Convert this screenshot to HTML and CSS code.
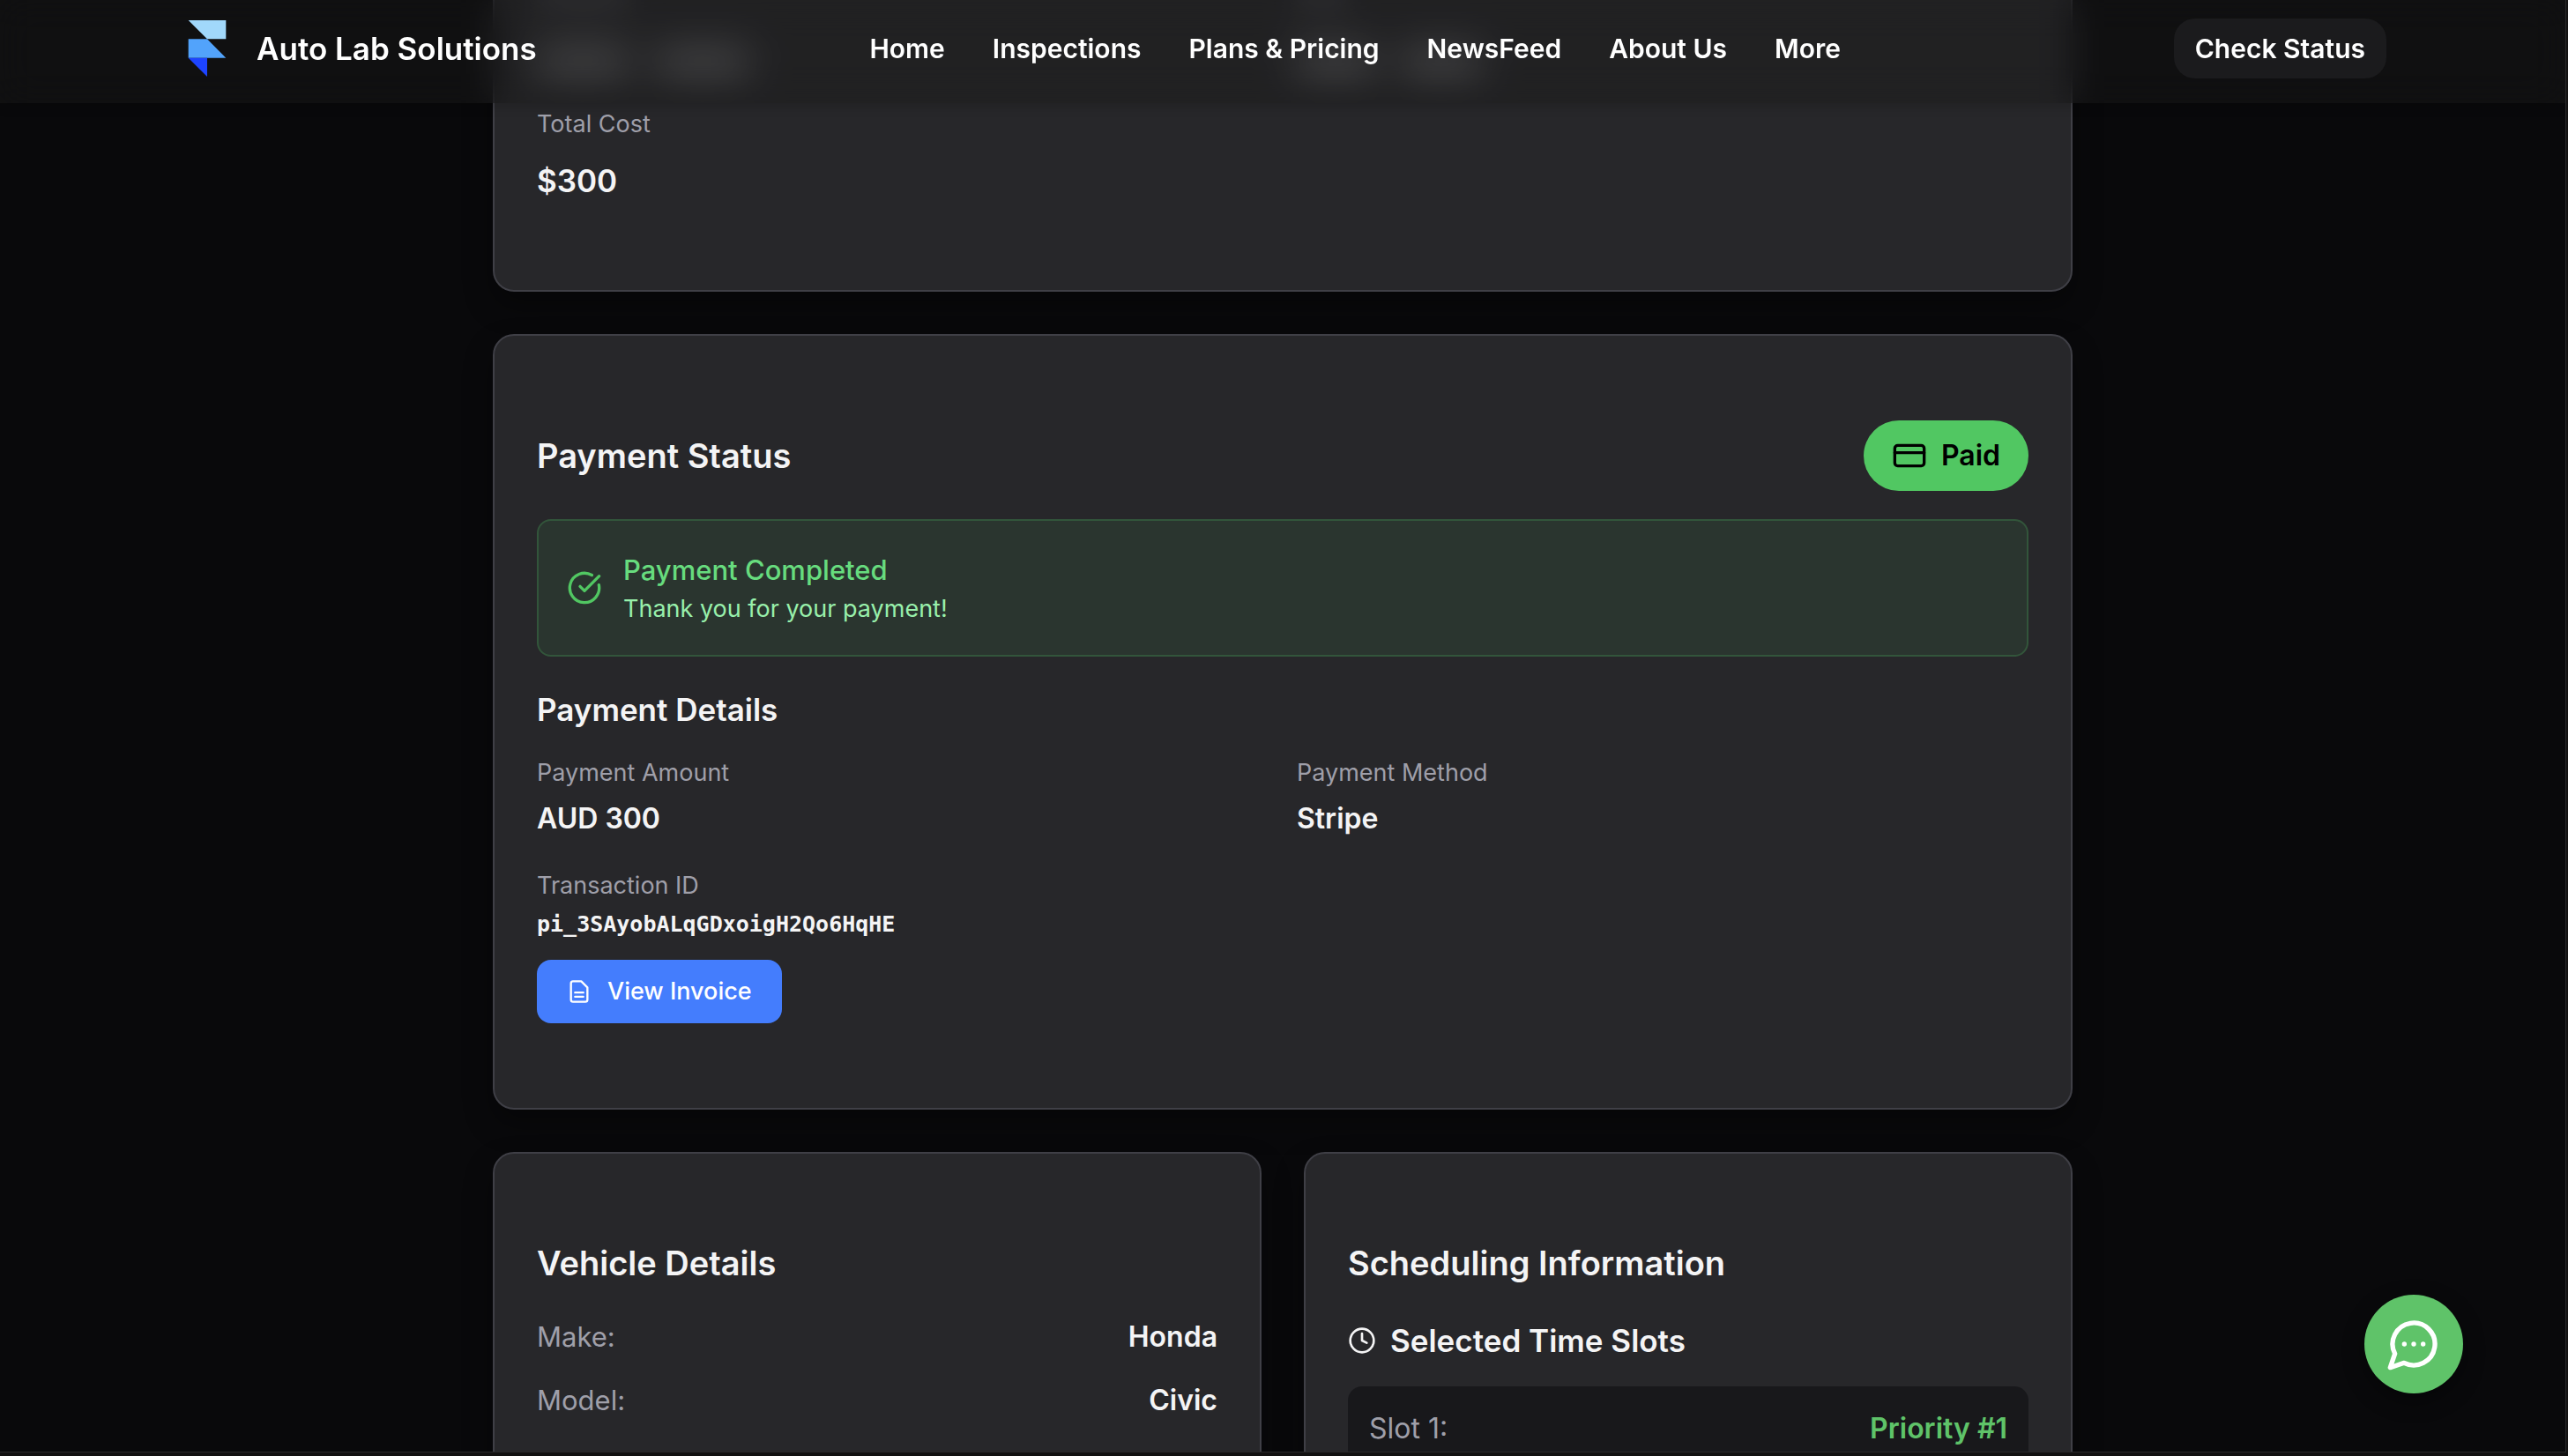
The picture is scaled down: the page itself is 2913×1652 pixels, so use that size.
FILE: index.html
```
<!DOCTYPE html>
<html lang="en">
<head>
<meta charset="utf-8">
<meta name="viewport" content="width=device-width, initial-scale=1">
<title>Auto Lab Solutions</title>
<link rel="stylesheet" href="styles.css">
</head>
<body>
<div class="window">
  <div class="viewport">
    <header class="header">
      <div class="header-inner">
        <a class="brand" href="#">
          <svg class="logo" viewBox="0 0 64 64" aria-hidden="true">
            <path fill="#a1d8fb" d="M10.67 0h42.66v21.33H32z"/>
            <path fill="#52a3fb" d="M10.67 21.33H32l21.33 21.34H10.67z"/>
            <path fill="#1d44ff" d="M10.67 42.67H32V64z"/>
          </svg>
          <span>Auto Lab Solutions</span>
        </a>
        <nav class="nav">
          <a href="#">Home</a>
          <a href="#">Inspections</a>
          <a href="#">Plans &amp; Pricing</a>
          <a href="#">NewsFeed</a>
          <a href="#">About Us</a>
          <a href="#">More</a>
        </nav>
        <button class="status-button" type="button">Check Status</button>
      </div>
    </header>

    <div class="scroll">
      <main class="page">
        <section class="card summary">
          <div class="grid" aria-hidden="true">
            <div class="field">
              <div class="ghost ghost-label"><i class="w-l"></i></div>
              <div class="ghost ghost-value"><i class="w-l"></i><i class="w-l"></i></div>
            </div>
            <div class="field">
              <div class="ghost ghost-label"><i class="w-s"></i></div>
              <div class="ghost ghost-value"><i class="w-m"></i><i class="w-m"></i></div>
            </div>
          </div>
          <dl class="field field-total">
            <dt class="label">Total Cost</dt>
            <dd class="total">$300</dd>
          </dl>
        </section>

        <section class="card payment">
          <div class="card-head">
            <h2>Payment Status</h2>
            <span class="pill">
              <svg class="icon icon-l" viewBox="0 0 24 24" aria-hidden="true"><rect x="2" y="5" width="20" height="14" rx="2"/><path d="M2 10h20"/></svg>
              Paid
            </span>
          </div>
          <div class="alert">
            <svg class="icon icon-l" viewBox="0 0 24 24" aria-hidden="true"><path d="M21.801 10A10 10 0 1 1 17 3.335"/><path d="m9 11 3 3L22 4"/></svg>
            <div>
              <p class="alert-title">Payment Completed</p>
              <p class="alert-text">Thank you for your payment!</p>
            </div>
          </div>
          <div class="details">
            <h3>Payment Details</h3>
            <dl class="grid">
              <div class="field">
                <dt class="label">Payment Amount</dt>
                <dd class="value">AUD 300</dd>
              </div>
              <div class="field">
                <dt class="label">Payment Method</dt>
                <dd class="value">Stripe</dd>
              </div>
              <div class="field">
                <dt class="label">Transaction ID</dt>
                <dd class="mono">pi_3SAyobALqGDxoigH2Qo6HqHE</dd>
              </div>
            </dl>
            <button class="invoice" type="button">
              <svg class="icon icon-s" viewBox="0 0 24 24" aria-hidden="true"><path d="M14 2H6a2 2 0 0 0-2 2v16a2 2 0 0 0 2 2h12a2 2 0 0 0 2-2V8z"/><path d="M8 13h8M8 17h8"/></svg>
              View Invoice
            </button>
          </div>
        </section>

        <div class="columns">
          <section class="card">
            <h2>Vehicle Details</h2>
            <dl class="rows">
              <div class="row"><dt>Make:</dt><dd>Honda</dd></div>
              <div class="row"><dt>Model:</dt><dd>Civic</dd></div>
            </dl>
          </section>
          <section class="card">
            <h2>Scheduling Information</h2>
            <div class="slots">
              <h3 class="slots-title">
                <svg class="icon icon-m" viewBox="0 0 24 24" aria-hidden="true"><circle cx="12" cy="12" r="10"/><path d="M12 6v6l4 2"/></svg>
                Selected Time Slots
              </h3>
              <div class="slot"><span>Slot 1:</span><strong>Priority #1</strong></div>
            </div>
          </section>
        </div>
      </main>
    </div>

    <button class="chat" type="button" aria-label="Open chat">
      <svg class="icon icon-xl" viewBox="0 0 24 24" aria-hidden="true"><path d="M7.9 20A9 9 0 1 0 4 16.1L2 22Z"/><path d="M8 12h.01M12 12h.01M16 12h.01"/></svg>
    </button>
  </div>
</div>
</body>
</html>
```
FILE: styles.css
```
* {
  box-sizing: border-box;
}

body,
h2,
h3,
p,
dl,
dd {
  margin: 0;
}

body {
  background: #121111;
  color: #f4f4f5;
  font-family: Inter, "Liberation Sans", sans-serif;
}

button {
  border: 0;
  font-family: inherit;
  cursor: pointer;
}

a {
  color: inherit;
  text-decoration: none;
}

/* Window frame */

.window {
  height: 100vh;
  padding: 0 2px 4px 0;
}

.viewport {
  position: relative;
  height: 100%;
  border: solid #29292a;
  border-width: 0 1px 1px 0;
  background: #09090b;
  overflow: hidden;
}

.scroll {
  height: 100%;
  overflow: hidden auto;
  scrollbar-width: none;
}

/* Header */

.header {
  position: absolute;
  inset: 0 0 auto;
  z-index: 1;
  padding: 21px 0 28px;
  background: rgba(25, 25, 25, 0.43);
  box-shadow: 0 4px 12px rgba(0, 0, 0, 0.16);
  color: #fff;
  backdrop-filter: blur(20px);
}

.header-inner {
  display: flex;
  align-items: center;
  justify-content: space-between;
  max-width: 2504px;
  margin: 0 auto;
}

.brand {
  display: flex;
  align-items: center;
  gap: 24px;
  font-size: 35px;
  font-weight: 600;
  line-height: 64px;
}

.logo {
  width: 64px;
  height: 64px;
}

.nav {
  display: flex;
  gap: 54px;
  font-size: 30px;
  font-weight: 600;
  line-height: 48px;
}

.status-button {
  padding: 10px 24px;
  border-radius: 24px;
  background: #1b1b1d;
  color: inherit;
  font-size: 30px;
  font-weight: 600;
  line-height: 48px;
}

/* Cards */

.page {
  display: flex;
  flex-direction: column;
  gap: 48px;
  max-width: 1792px;
  margin: -113px auto 0;
  padding-bottom: 96px;
}

.card {
  padding: 96px 48px;
  border: 2px solid #3f3f46;
  border-radius: 24px;
  background: #27272a;
  box-shadow: 0 16px 32px rgba(0, 0, 0, 0.35);
}

.columns {
  display: grid;
  grid-template-columns: 1fr 1fr;
  gap: 48px;
}

.grid {
  display: grid;
  grid-template-columns: 1fr 1fr;
  gap: 32px;
}

.field {
  display: flex;
  flex-direction: column;
  gap: 8px;
}

h2 {
  font-size: 38px;
  font-weight: 600;
  line-height: 56px;
}

h3 {
  font-size: 35px;
  font-weight: 600;
  line-height: 56px;
}

.label {
  color: #9f9fa9;
  font-size: 27px;
  line-height: 40px;
}

.value {
  font-size: 32px;
  font-weight: 600;
  line-height: 48px;
}

.mono {
  font-family: "DejaVu Sans Mono", "Liberation Mono", monospace;
  font-size: 25px;
  font-weight: 700;
  line-height: 32px;
}

.icon {
  flex: none;
  fill: none;
  stroke: currentColor;
  stroke-width: 2;
  stroke-linecap: round;
  stroke-linejoin: round;
}

.icon-s {
  width: 28px;
  height: 28px;
}

.icon-m {
  width: 32px;
  height: 32px;
}

.icon-l {
  width: 40px;
  height: 40px;
}

.icon-xl {
  width: 64px;
  height: 64px;
}

/* Summary: the first rows sit behind the header */

.summary {
  display: flex;
  flex-direction: column;
  gap: 24px;
}

.summary .field {
  gap: 16px;
}

.total {
  font-size: 35px;
  font-weight: 600;
  line-height: 56px;
}

.ghost {
  display: flex;
  align-items: center;
  gap: 32px;
  filter: blur(12px);
}

.ghost-label {
  height: 40px;
  color: rgba(159, 159, 169, 0.2);
}

.ghost-value {
  height: 56px;
  color: rgba(244, 244, 245, 0.42);
}

.ghost i {
  height: 24px;
  background: currentColor;
}

.w-s {
  width: 56px;
}

.w-m {
  width: 88px;
}

.w-l {
  width: 104px;
}

/* Payment */

.payment {
  display: flex;
  flex-direction: column;
  gap: 32px;
}

.card-head {
  display: flex;
  align-items: center;
  justify-content: space-between;
}

.pill {
  display: flex;
  align-items: center;
  gap: 16px;
  padding: 16px 32px;
  border-radius: 40px;
  background: #51c762;
  color: #000;
  font-size: 32px;
  font-weight: 600;
  line-height: 48px;
}

.alert {
  display: flex;
  align-items: center;
  gap: 24px;
  padding: 32px;
  border: 2px solid rgba(81, 199, 98, 0.22);
  border-radius: 16px;
  background: rgba(81, 199, 98, 0.09);
  color: #51c762;
}

.alert-title {
  color: #67dc7e;
  font-size: 31px;
  font-weight: 500;
  line-height: 48px;
}

.alert-text {
  color: #98f0ab;
  font-size: 27px;
  line-height: 40px;
}

.details {
  display: flex;
  flex-direction: column;
  gap: 24px;
}

.invoice {
  display: flex;
  align-items: center;
  align-self: flex-start;
  gap: 18px;
  padding: 16px 34px;
  border-radius: 16px;
  background: #447dfd;
  color: #fff;
  font-size: 27px;
  font-weight: 500;
  line-height: 40px;
}

/* Vehicle and schedule */

.rows {
  display: flex;
  flex-direction: column;
  gap: 24px;
  margin-top: 32px;
}

.row {
  display: flex;
  justify-content: space-between;
  line-height: 48px;
}

.row dt {
  color: #9f9fa9;
  font-size: 31px;
}

.row dd {
  font-size: 32px;
  font-weight: 600;
}

.slots {
  display: flex;
  flex-direction: column;
  gap: 24px;
  margin-top: 32px;
}

.slots-title {
  display: flex;
  align-items: center;
  gap: 16px;
}

.slot {
  display: flex;
  justify-content: space-between;
  padding: 24px;
  border-radius: 16px;
  background: #18181b;
  color: #9f9fa9;
  font-size: 32px;
  line-height: 48px;
}

.slot strong {
  color: #5fc369;
  font-weight: 600;
}

/* Chat */

.chat {
  position: absolute;
  right: 116px;
  bottom: 66px;
  display: grid;
  place-items: center;
  width: 112px;
  height: 112px;
  padding: 0;
  border-radius: 50%;
  background: #5fc369;
  box-shadow: 0 8px 24px rgba(0, 0, 0, 0.4);
  color: #fff;
}
```
